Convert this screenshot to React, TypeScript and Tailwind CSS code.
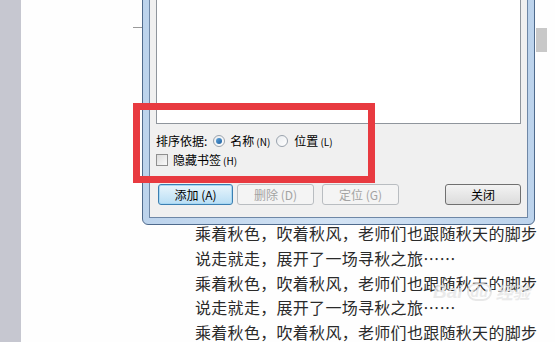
const lines = [
  "乘着秋色，吹着秋风，老师们也跟随秋天的脚步",
  "说走就走，展开了一场寻秋之旅……",
  "乘着秋色，吹着秋风，老师们也跟随秋天的脚步",
  "说走就走，展开了一场寻秋之旅……",
  "乘着秋色，吹着秋风，老师们也跟随秋天的脚步",
];

const cjk = "font-['Noto_Sans_CJK_SC','Noto_Sans',sans-serif]";

function Radio({ checked }: { checked?: boolean }) {
  return (
    <span className="flex h-[12px] w-[12px] items-center justify-center rounded-full border border-[#9aa3ad] bg-gradient-to-br from-[#e9ecef] to-[#ffffff]">
      {checked && (
        <span className="h-[6px] w-[6px] rounded-full bg-gradient-to-br from-[#5fa4dc] to-[#1c5f9e]"></span>
      )}
    </span>
  );
}

function Btn({
  label,
  hot,
  disabled,
  className,
}: {
  label: string;
  hot?: string;
  disabled?: boolean;
  className: string;
}) {
  let look = "border-[#707070] bg-gradient-to-b from-[#f3f3f3] to-[#dcdcdc] text-black";
  if (disabled) look = "border-[#b9bdc1] bg-[#f4f4f4] text-[#a3a3a3]";
  if (hot === "default")
    look = "border-[#3c7fb1] bg-gradient-to-b from-[#e8f5fc] to-[#b9def4] text-black shadow-[inset_0_0_0_1px_#a7d8f4]";
  return (
    <div
      className={`flex h-[21px] items-center justify-center rounded-[3px] border text-[12px] ${look} ${className}`}
    >
      {label}
    </div>
  );
}

export default function App() {
  return (
    <div className={`relative flex h-[342px] w-[555px] overflow-hidden bg-white ${cjk}`}>
      <div className="w-[21px] shrink-0 bg-[#c6c7d0]"></div>

      <div className="relative flex-1 bg-[#fefefe]">
        {/* margin corner mark */}
        <div className="absolute left-[112px] top-[27px] h-px w-[9px] bg-[#9a9a9a]"></div>
        {/* scroll thumb at right */}
        <div className="absolute left-[515px] top-[28px] h-[24px] w-[11px] bg-[#c8c8c8]"></div>

        <div className="pl-[174px] pt-[221px] text-[16px] leading-[24.75px] tracking-[0.3px] text-[#2a2a2a]">
          {lines.map((l, i) => (
            <div key={i} className="whitespace-nowrap">
              {l}
            </div>
          ))}
        </div>

        {/* watermark */}
        <div className="absolute left-[412px] top-[282px] flex items-center gap-[4px] text-[19px] font-bold italic leading-none text-[#e6e6e6] opacity-80">
          <span className="font-['Liberation_Sans',sans-serif]">Bai</span>
          <span className="rounded-full border-2 border-[#e3e3e3] px-[2px] font-['Liberation_Sans',sans-serif] text-[14px]">du</span>
          <span className="text-[17px]">经验</span>
        </div>
      </div>

      {/* dialog window */}
      <div className="absolute left-[142px] top-[-10px] h-[235px] w-[393px] rounded-b-[6px] border border-[#4f6a8c] bg-gradient-to-r from-[#bcd3ec] via-[#d3e3f4] to-[#bcd3ec] p-[6px]">
        <div className="h-full border border-[#6e87a6] bg-[#f0f0f0] px-[6px] text-[12px] text-black">
          <div className="h-[126px] border border-[#8f959c] border-t-0 bg-white"></div>

          <div className="mt-[9px] flex h-[16px] items-center">
            <span>排序依据:</span>
            <span className="ml-[6px]">
              <Radio checked />
            </span>
            <span className="ml-[5px]">名称</span>
            <span className="ml-[2px] text-[10px]">(N)</span>
            <span className="ml-[6px]">
              <Radio />
            </span>
            <span className="ml-[6px]">位置</span>
            <span className="ml-[2px] text-[10px]">(L)</span>
          </div>

          <div className="mt-[3px] flex h-[16px] items-center">
            <span className="h-[12px] w-[12px] border border-[#8f8f8f] bg-gradient-to-br from-[#dcdcdc] to-[#fafafa]"></span>
            <span className="ml-[5px]">隐藏书签</span>
            <span className="ml-[2px] text-[10px]">(H)</span>
          </div>

          <div className="mt-[16px] flex">
            <Btn label="添加 (A)" hot="default" className="ml-[2px] w-[75px]" />
            <Btn label="删除 (D)" disabled className="ml-[4px] w-[77px]" />
            <Btn label="定位 (G)" disabled className="ml-[8px] w-[77px]" />
            <Btn label="关闭" className="ml-auto w-[76px]" />
          </div>
        </div>
      </div>

      {/* red annotation box */}
      <div className="absolute left-[133px] top-[103px] h-[80px] w-[242px] border-[7px] border-[#e83a40]"></div>
    </div>
  );
}
